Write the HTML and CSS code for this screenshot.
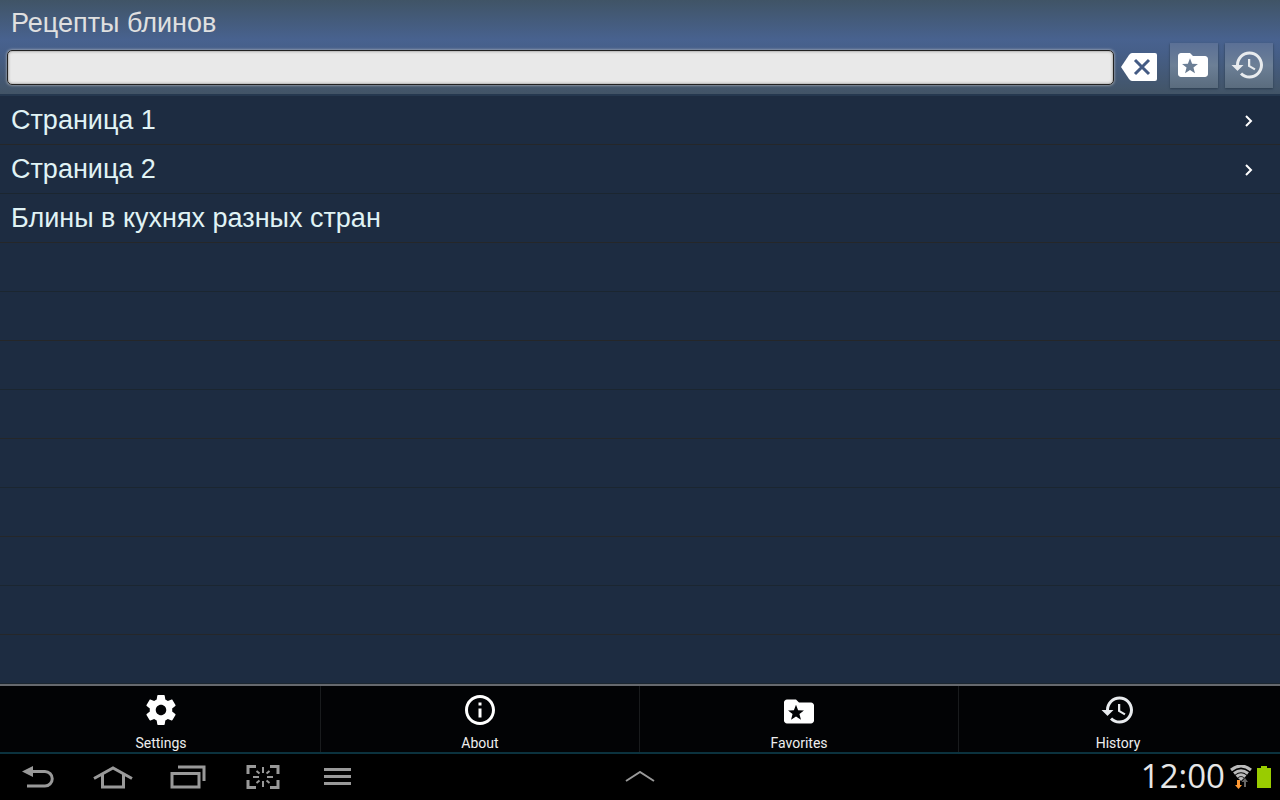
FILE: index.html
```html
<!DOCTYPE html>
<html lang="ru">
<head>
    <meta charset="UTF-8">
    <meta name="viewport" content="width=device-width, initial-scale=1.0">
    <title>Рецепты блинов</title>
    <link rel="stylesheet" href="styles.css">
</head>
<body>
    <svg class="symbols" aria-hidden="true">
        <symbol id="folder" viewBox="0 0 24 24">
            <path fill-rule="evenodd" d="M20 6h-8l-2-2H4c-1.100 0-2 .9-2 2v12c0 1.100.9 2 2 2h16c1.100 0 2-.9 2-2V8c0-1.100-.9-2-2-2zM10 7.500l1.400 3.600 3.900.2-3 2.400 1 3.800-3.300-2.100-3.300 2.100 1-3.800-3-2.400 3.900-.2z"/>
        </symbol>
        <symbol id="history" viewBox="0 0 24 24">
            <path d="M13 3c-4.970 0-9 4.030-9 9H1l3.890 3.890.07.14L9 12H6c0-3.870 3.130-7 7-7s7 3.130 7 7-3.130 7-7 7c-1.930 0-3.680-.79-4.940-2.060l-1.420 1.420C8.270 19.990 10.510 21 13 21c4.970 0 9-4.030 9-9s-4.030-9-9-9zm-1 5v5l4.280 2.540.72-1.210-3.500-2.080V8H12z"/>
        </symbol>
    </svg>

    <header>
        <h1>Рецепты блинов</h1>
        <form class="search">
            <input type="text" class="field" aria-label="Поиск">
            <button type="reset" class="clear" aria-label="Очистить">
                <svg width="36" height="28" viewBox="0 0 36 28"><path fill="#fff" d="M0 14L8 2Q9.500 0 11 0H34Q36 0 36 2V26Q36 28 34 28H11Q9.500 28 8 26z"/><path stroke="#445b84" stroke-width="3" fill="none" d="M14 7L28 21M28 7L14 21"/></svg>
            </button>
            <button type="button" class="tool" aria-label="Favorites"><svg class="icon"><use href="#folder"/></svg></button>
            <button type="button" class="tool soft" aria-label="History"><svg class="icon"><use href="#history"/></svg></button>
        </form>
    </header>

    <main>
        <ul class="list">
            <li><a href="#">Страница 1 <svg class="arrow" viewBox="0 0 8 12"><path d="M1 1l5 5-5 5"/></svg></a></li>
            <li><a href="#">Страница 2 <svg class="arrow" viewBox="0 0 8 12"><path d="M1 1l5 5-5 5"/></svg></a></li>
            <li><a href="#">Блины в кухнях разных стран</a></li>
        </ul>
    </main>

    <div class="menu">
        <button type="button">
            <svg class="icon" viewBox="0 0 24 24"><path d="M19.430 12.980c.04-.32.07-.64.07-.98s-.03-.66-.07-.98l2.110-1.650c.19-.15.24-.42.12-.64l-2-3.460c-.12-.22-.39-.3-.61-.22l-2.490 1c-.52-.4-1.080-.73-1.690-.98l-.38-2.650C14.460 2.180 14.250 2 14 2h-4c-.25 0-.46.18-.49.42l-.38 2.650c-.61.25-1.170.59-1.690.98l-2.490-1c-.23-.09-.49 0-.61.22l-2 3.460c-.13.22-.07.49.12.64l2.110 1.650c-.04.32-.07.65-.07.98s.03.66.07.98l-2.110 1.650c-.19.15-.24.42-.12.64l2 3.460c.12.22.39.3.61.22l2.490-1c.52.4 1.080.73 1.690.98l.38 2.650c.03.24.24.42.49.42h4c.25 0 .46-.18.49-.42l.38-2.650c.61-.25 1.170-.59 1.690-.98l2.490 1c.23.09.49 0 .61-.22l2-3.460c.12-.22.07-.49-.12-.64l-2.110-1.650zM12 15.500c-1.930 0-3.500-1.570-3.500-3.500s1.570-3.500 3.500-3.500 3.500 1.570 3.500 3.500-1.570 3.500-3.500 3.500z"/></svg>
            <span>Settings</span>
        </button>
        <button type="button">
            <svg class="icon" viewBox="0 0 24 24"><path d="M11 17h2v-6h-2v6zm1-15C6.480 2 2 6.480 2 12s4.480 10 10 10 10-4.480 10-10S17.520 2 12 2zm0 18c-4.410 0-8-3.590-8-8s3.590-8 8-8 8 3.590 8 8-3.590 8-8 8zM11 9h2V7h-2v2z"/></svg>
            <span>About</span>
        </button>
        <button type="button">
            <svg class="icon" viewBox="0 -1 24 24"><use href="#folder" width="24" height="24"/></svg>
            <span>Favorites</span>
        </button>
        <button type="button" class="soft">
            <svg class="icon"><use href="#history"/></svg>
            <span>History</span>
        </button>
    </div>

    <nav>
        <div class="keys">
            <button type="button" aria-label="Back"><svg width="34" height="24" viewBox="0 0 34 24"><path fill="#999" d="M1 6.500L12 1v11z"/><path d="M10 6.500H24a7 7 0 0 1 0 14.500H6"/></svg></button>
            <button type="button" aria-label="Home"><svg width="40" height="24" viewBox="0 0 40 24"><path d="M1 13.500L20 3l19 10.500M9.500 9v13h21V9"/></svg></button>
            <button type="button" aria-label="Recent"><svg width="36" height="24" viewBox="0 0 36 24"><path d="M2 8.500h27V22H2zM8 2h26v14"/></svg></button>
            <button type="button" aria-label="Screenshot"><svg width="34" height="24" viewBox="0 0 34 24"><path d="M2 9V1.500h8M24 1.500h8V9M32 15v7.500h-8M10 22.500H2V15"/><path class="thin" d="M17 2v6M17 16v6M7 12h6M21 12h6M10.500 6l3 2.500M23.500 6l-3 2.500M10.500 18l3-2.500M23.500 18l-3-2.500"/></svg></button>
            <button type="button" aria-label="Menu"><svg width="27" height="18" viewBox="0 0 27 18"><path d="M0 1.500h27M0 8.500h27M0 15.500h27"/></svg></button>
        </div>
        <button type="button" aria-label="Expand"><svg width="30" height="12" viewBox="0 0 30 12"><path class="thin" d="M1 10L15 1l14 9"/></svg></button>
        <div class="status">
            <time>12:00</time>
            <svg width="22" height="24" viewBox="0 0 22 24">
                <path fill="none" stroke="#bbb" stroke-width="2.500" d="M1 5Q11-3 21 5M4 8.500q7-5.500 14 0M6.500 11.500q4.500-3.500 9 0"/>
                <path fill="#bbb" d="M8 13q3-2 6 0l-3 3z"/>
                <path fill="#f93" d="M7 15h3v5h2l-3.500 4L5 20h2z"/>
                <path fill="#666" d="M14 22h2v-5h2l-3-4-3.500 4H14z"/>
            </svg>
            <svg width="14" height="22" viewBox="0 0 14 22"><path fill="#9c0" d="M4 0h6v2h4v20H0V2h4z"/></svg>
        </div>
    </nav>
</body>
</html>
```
FILE: styles.css
```css
* {box-sizing: border-box;}
body {
    margin: 0; min-height: 100vh;
    display: flex; flex-direction: column;
    background: #000; color: #e0f0f5;
    font-family: "Liberation Sans", Arial, sans-serif;
}
button {
    padding: 0; border: 0;
    background: none; color: inherit;
    display: flex; align-items: center; justify-content: center;
}
svg {display: block;}
.symbols {position: absolute; width: 0; height: 0;}
.icon {width: 36px; height: 36px; fill: #fff;}
.soft .icon {fill: #e8ebee;}

/* header */
header {
    padding: 0 7px 6px;
    background: linear-gradient(#405466, #48628f 42%, #465f89 55%, #425466);
    border-bottom: 2px solid #25384f;
}
h1 {
    margin: 0; padding: 3px 4px 0;
    font-size: 27px; font-weight: normal; line-height: 40px;
    color: #e0e0e0;
}
.search {display: flex; align-items: center; gap: 7px;}
.field {
    flex: 1; min-width: 0; height: 35px;
    margin-top: 4px; padding: 0 8px;
    border: 1px solid #222; border-radius: 5px;
    background: #e9e9e9; font-size: 24px;
    box-shadow: 0 0 3px #ccc, inset 0 0 3px #777;
}
.clear {margin: 3px 6px 0 0;}
.tool {
    width: 48px; height: 45px; padding: 0 2px 1px 0;
    background: linear-gradient(#5b7096, #6c7f96 50%, #5a6c7e);
    box-shadow: 0 1px 2px #2b3c50;
}

/* list */
main {
    flex: 1;
    background: linear-gradient(#1d2c41 48px, #252729 48px, #252729 49px, #1d2c41 49px, #1d2c41 97px, #1b2630 97px);
    background-size: 100% 98px;
}
.list {margin: 0; padding: 0; list-style: none;}
.list a {
    display: flex; align-items: center; justify-content: space-between;
    height: 49px; padding: 0 27px 0 11px;
    font-size: 27px; color: #e0f3f5; text-decoration: none;
}
.arrow {width: 8px; height: 12px; fill: none; stroke: #fff; stroke-width: 2;}

/* options menu */
.menu {
    display: flex; padding: 0 2px;
    background: #020305;
    border-top: 2px solid #66696e; border-bottom: 2px solid #0b323e;
}
.menu button {
    flex: 1; flex-direction: column; gap: 6px;
    padding: 6px 0 0;
    border-right: 1px solid #191b1d;
    font: 14px/18px Roboto, sans-serif; color: #eee;
}
.menu button:last-child {border-color: transparent;}

/* system bar */
nav {
    display: grid; grid-template-columns: 1fr auto 1fr; align-items: center;
    height: 46px;
}
nav path {stroke-width: 3;}
nav button svg {fill: none; stroke: #999;}
nav button path[fill] {stroke: none;}
nav .thin {stroke-width: 2;}
.keys {display: flex;}
.keys button {width: 75px; height: 46px;}
.status {
    display: flex; align-items: center; justify-content: flex-end; gap: 5px;
    padding-right: 9px;
}
time {font: 33px/44px "Open Sans", sans-serif; color: #e6e6e6; padding-bottom: 2px;}
```
